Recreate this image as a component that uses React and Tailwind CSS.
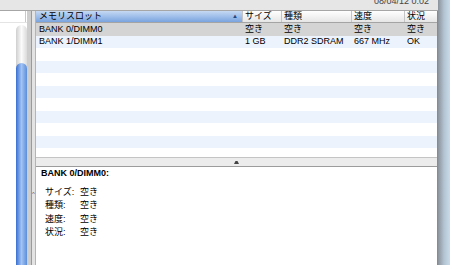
const rows = [
  ["BANK 0/DIMM0", "空き", "空き", "空き", "空き"],
  ["BANK 1/DIMM1", "1 GB", "DDR2 SDRAM", "667 MHz", "OK"],
  ["", "", "", "", ""],
  ["", "", "", "", ""],
  ["", "", "", "", ""],
  ["", "", "", "", ""],
  ["", "", "", "", ""],
  ["", "", "", "", ""],
  ["", "", "", "", ""],
  ["", "", "", "", ""],
  ["", "", "", "", ""],
];

const details = [
  ["サイズ:", "空き"],
  ["種類:", "空き"],
  ["速度:", "空き"],
  ["状況:", "空き"],
];

// row backgrounds: first one is the (inactive) selection, then zebra stripes
const rowBg = (i) => (i === 0 ? "bg-[#d4d4d4]" : i % 2 === 1 ? "bg-[#edf3fd]" : "bg-white");

const App = () => {
  return (
    <div
      className="w-[450px] h-[265px] flex overflow-hidden bg-white text-[9px] text-black"
      style={{ fontFamily: '"Liberation Sans", "Noto Sans CJK JP", sans-serif' }}
    >
      {/* Window area */}
      <div className="w-[438px] flex flex-col">
        {/* Toolbar strip with clipped timestamp */}
        <div className="h-[11px] shrink-0 bg-[#e6e6e6] border-b border-[#a6a6a6] flex justify-end pr-[9px] overflow-hidden">
          <span className="leading-[9px] -mt-[3px] text-[#444]">08/04/12 0:02</span>
        </div>

        <div className="flex flex-1 min-h-0">
          {/* Left source list with scroller */}
          <div className="w-[27px] flex flex-col bg-white">
            <div className="h-[12px] shrink-0 flex border-b border-[#e4e4e4]">
              <div className="w-[26px] border-r border-[#c8c8c8]"></div>
            </div>
            <div className="flex flex-1 min-h-0">
              <div className="w-[16px]"></div>
              <div className="w-[11px] mt-[2px] flex flex-col rounded-t-full bg-gradient-to-r from-[#cfcfcf] via-[#fbfbfb] to-[#dadada]">
                <div className="h-[38px] shrink-0"></div>
                <div className="flex-1 rounded-t-full bg-gradient-to-r from-[#3a6ecf] via-[#a3c4f3] to-[#5b8edb]"></div>
              </div>
            </div>
          </div>

          {/* Bevel between panes */}
          <div className="w-[8px] flex">
            <div className="w-[4px] bg-[#cdcdcd]"></div>
            <div className="w-[1px] bg-[#9a9a9a]"></div>
            <div className="flex-1 bg-[#e3e3e3] flex items-start justify-center pt-[180px] text-[6px] leading-none text-[#555]">
              ^
            </div>
          </div>

          {/* Memory table + detail pane */}
          <div className="flex-1 flex flex-col border-l border-[#b4b4b4] border-r border-r-[#8a8a8a] min-w-0">
            {/* Header */}
            <div className="h-[12px] shrink-0 flex border-b border-[#a4a4a4] bg-gradient-to-b from-white to-[#e6e6e6] leading-[11px]">
              <div className="w-[206px] pl-[3px] pr-[4px] flex justify-between bg-gradient-to-b from-[#c6d9f3] to-[#79a4df]">
                <span>メモリスロット</span>
                <span className="text-[6px] text-[#27467a]">▲</span>
              </div>
              <div className="w-[39px] border-l border-[#c4c4c4] pl-[2px]">サイズ</div>
              <div className="w-[70px] border-l border-[#c4c4c4] pl-[2px]">種類</div>
              <div className="w-[53px] border-l border-[#c4c4c4] pl-[2px]">速度</div>
              <div className="flex-1 border-l border-[#c4c4c4] pl-[2px]">状況</div>
            </div>

            {/* Rows */}
            <div className="flex-1 min-h-0 overflow-hidden">
              {rows.map((r, i) => (
                <div key={i} className={`h-[12.5px] flex items-center ${rowBg(i)}`}>
                  <div className="w-[206px] pl-[3px]">{r[0]}</div>
                  <div className="w-[39px] pl-[3px]">{r[1]}</div>
                  <div className="w-[70px] pl-[3px]">{r[2]}</div>
                  <div className="w-[53px] pl-[3px]">{r[3]}</div>
                  <div className="flex-1 pl-[3px]">{r[4]}</div>
                </div>
              ))}
            </div>

            {/* Splitter */}
            <div className="h-[10px] shrink-0 bg-[#ececec] border-t border-[#c4c4c4] border-b border-b-[#9c9c9c] flex items-center justify-center">
              <svg width="5" height="3" viewBox="0 0 5 3">
                <polygon points="0,3 1.5,0 3.5,0 5,3" fill="#444" />
              </svg>
            </div>

            {/* Detail pane */}
            <div className="h-[98px] shrink-0 bg-white pl-[5px]">
              <div className="font-bold leading-[12px]">BANK 0/DIMM0:</div>
              <div className="mt-[7px] pl-[4px]">
                {details.map(([k, v]) => (
                  <div key={k} className="flex leading-[13.3px]">
                    <span className="w-[35px]">{k}</span>
                    <span>{v}</span>
                  </div>
                ))}
              </div>
            </div>
          </div>
        </div>
      </div>

      {/* Desktop edge behind the window */}
      <div className="flex-1 bg-gradient-to-r from-[#8b939c] via-[#b3c3d1] to-[#c9dbe9]"></div>
    </div>
  );
};

export default App;
